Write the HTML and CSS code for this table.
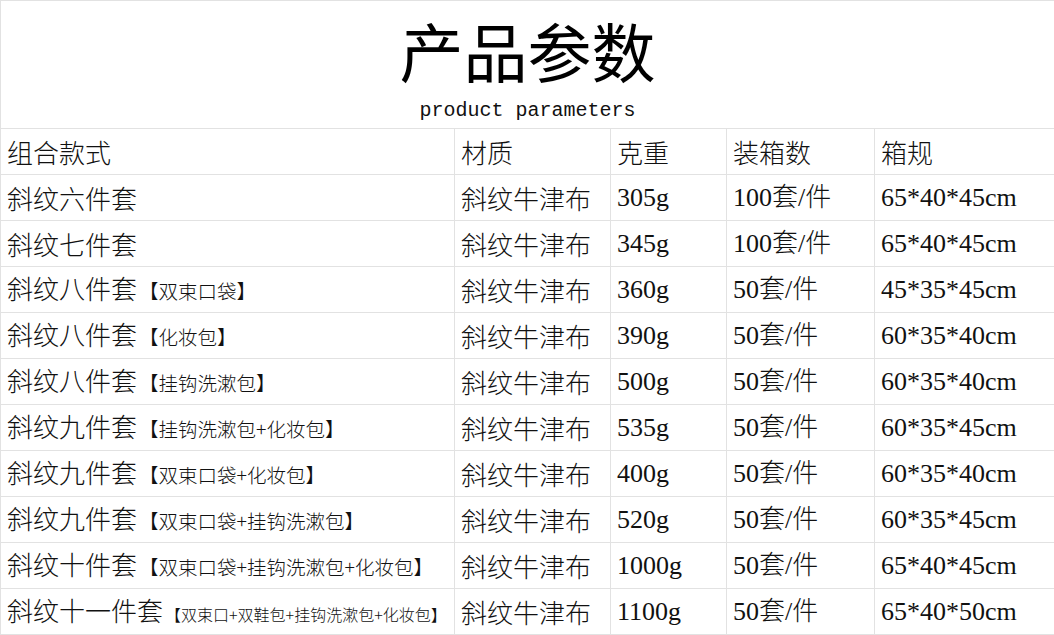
FILE: index.html
```html
<!DOCTYPE html>
<html lang="zh-CN">
<head>
<meta charset="utf-8">
<title>产品参数</title>
<link rel="stylesheet" href="styles.css">
</head>
<body>
<table class="params">
  <colgroup>
    <col class="c-style">
    <col class="c-mat">
    <col class="c-wt">
    <col class="c-qty">
    <col class="c-size">
  </colgroup>
  <thead>
    <tr class="title-row">
      <th colspan="5" class="title-cell">
        <div class="title">产品参数</div>
        <div class="subtitle">product parameters</div>
      </th>
    </tr>
    <tr class="head-row">
      <th>组合款式</th>
      <th>材质</th>
      <th>克重</th>
      <th>装箱数</th>
      <th>箱规</th>
    </tr>
  </thead>
  <tbody>
    <tr><td>斜纹六件套</td><td>斜纹牛津布</td><td class="num">305g</td><td class="num">100套/件</td><td class="num">65*40*45cm</td></tr>
    <tr><td>斜纹七件套</td><td>斜纹牛津布</td><td class="num">345g</td><td class="num">100套/件</td><td class="num">65*40*45cm</td></tr>
    <tr><td>斜纹八件套<span class="note">【双束口袋】</span></td><td>斜纹牛津布</td><td class="num">360g</td><td class="num">50套/件</td><td class="num">45*35*45cm</td></tr>
    <tr><td>斜纹八件套<span class="note">【化妆包】</span></td><td>斜纹牛津布</td><td class="num">390g</td><td class="num">50套/件</td><td class="num">60*35*40cm</td></tr>
    <tr><td>斜纹八件套<span class="note">【挂钩洗漱包】</span></td><td>斜纹牛津布</td><td class="num">500g</td><td class="num">50套/件</td><td class="num">60*35*40cm</td></tr>
    <tr><td>斜纹九件套<span class="note">【挂钩洗漱包+化妆包】</span></td><td>斜纹牛津布</td><td class="num">535g</td><td class="num">50套/件</td><td class="num">60*35*45cm</td></tr>
    <tr><td>斜纹九件套<span class="note">【双束口袋+化妆包】</span></td><td>斜纹牛津布</td><td class="num">400g</td><td class="num">50套/件</td><td class="num">60*35*40cm</td></tr>
    <tr><td>斜纹九件套<span class="note">【双束口袋+挂钩洗漱包】</span></td><td>斜纹牛津布</td><td class="num">520g</td><td class="num">50套/件</td><td class="num">60*35*45cm</td></tr>
    <tr><td>斜纹十件套<span class="note">【双束口袋+挂钩洗漱包+化妆包】</span></td><td>斜纹牛津布</td><td class="num">1000g</td><td class="num">50套/件</td><td class="num">65*40*45cm</td></tr>
    <tr><td>斜纹十一件套<span class="note small">【双束口+双鞋包+挂钩洗漱包+化妆包】</span></td><td>斜纹牛津布</td><td class="num">1100g</td><td class="num">50套/件</td><td class="num">65*40*50cm</td></tr>
  </tbody>
</table>
</body>
</html>
```

FILE: styles.css
```css
html, body {
  margin: 0;
  padding: 0;
  background: #ffffff;
}

.params {
  width: 1054px;
  border-collapse: collapse;
  table-layout: fixed;
  color: #111111;
  font-family: "Noto Sans CJK SC", sans-serif;
  font-weight: 300;
}

.c-style { width: 454px; }
.c-mat { width: 156px; }
.c-wt { width: 116px; }
.c-qty { width: 148px; }
.c-size { width: 180px; }

.params th,
.params td {
  border: 1px solid #e2e2e2;
  padding: 0 0 0 6px;
  text-align: left;
  font-weight: 300;
  font-size: 26px;
  height: 45px;
  line-height: 30px;
  white-space: nowrap;
  overflow: hidden;
  vertical-align: middle;
}

.params .title-cell {
  height: 127px;
  padding: 0;
  text-align: center;
  vertical-align: top;
}

.title {
  font-size: 64px;
  line-height: 66px;
  margin-top: 15px;
  color: #000000;
  font-weight: 400;
}

.subtitle {
  font-family: "Liberation Mono", monospace;
  font-size: 20px;
  line-height: 20px;
  margin-top: 19px;
  color: #111111;
}

.num {
  font-family: "Liberation Serif", "Noto Sans CJK SC", serif;
}

.note {
  font-size: 19.5px;
  margin-left: 2px;
}

.note.small {
  font-size: 16px;
  margin-left: 2px;
}
```
